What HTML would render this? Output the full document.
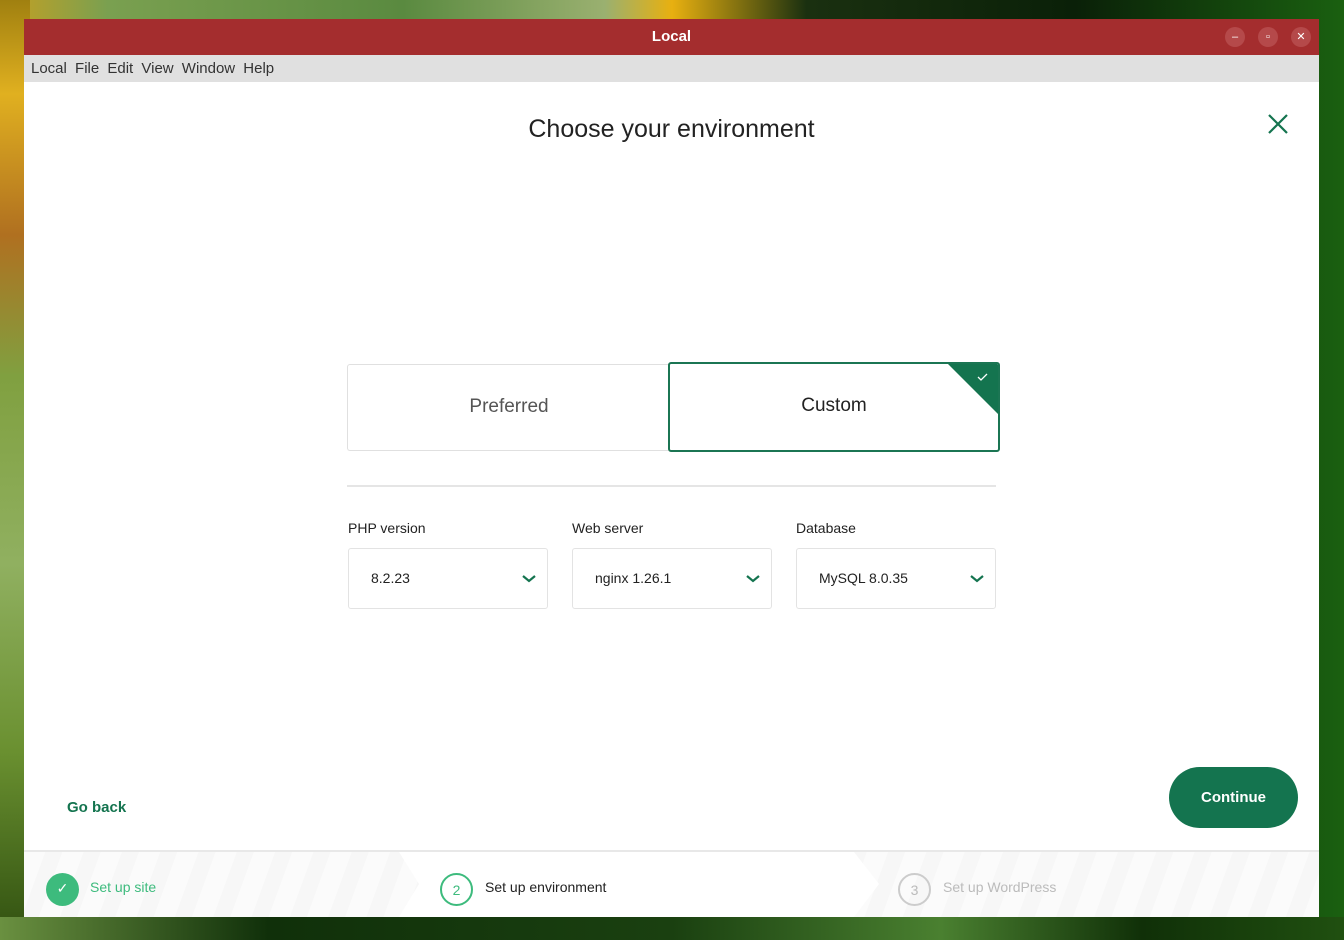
<!DOCTYPE html>
<html><head><style>
*{box-sizing:border-box;margin:0;padding:0}
body{width:1344px;height:940px;overflow:hidden;position:relative;font-family:"Liberation Sans",sans-serif;
background:linear-gradient(90deg,#c8a020 0%,#7aa050 8%,#5a8a40 30%,#9ab070 45%,#e8b010 50%,#1a3010 60%,#0a2008 80%,#1a6010 100%)}
.bg2{position:absolute;left:0;top:0;width:30px;height:940px;background:linear-gradient(180deg,#a08010,#e0b020 10%,#b07020 25%,#80a040 40%,#90b060 60%,#6a9030 80%,#305010)}
.bg3{position:absolute;left:0;top:917px;width:1344px;height:23px;background:linear-gradient(90deg,#6a9040,#10300a 20%,#1a4010 50%,#4a8030 70%,#103008 85%,#205010)}
.win{position:absolute;left:24px;top:19px;width:1295px;height:898px;background:#fff}
.title{height:36px;background:#a42d2e;color:#fff;font-weight:bold;font-size:15px;text-align:center;line-height:36px;position:relative}
.wb{position:absolute;top:8px;width:20px;height:20px;border-radius:50%;background:#b5494a;color:#fff;font-size:11px;line-height:20px;text-align:center;font-weight:normal}
.menu{height:27px;background:#e0e0e0;font-size:15px;color:#333;line-height:27px;padding-left:7px;word-spacing:4px}
h1{position:absolute;top:96px;width:100%;text-align:center;font-weight:normal;font-size:25px;color:#222}
.card{position:absolute;top:345px;height:87px;border:1px solid #e0e0e0;border-radius:3px;text-align:center;line-height:84px;font-size:19px}
.sel{position:absolute;top:529px;width:200px;height:61px;border:1px solid #e3e3e3;border-radius:3px;font-size:14px;color:#222;line-height:59px;padding-left:22px}
.sel svg{position:absolute;right:10px;top:25px}
.lab{position:absolute;top:501px;font-size:14px;color:#222}
.foot{position:absolute;left:0;top:831px;width:1295px;height:67px;border-top:2px solid #e8e8e8;
background:repeating-linear-gradient(110deg,#fbfbfb 0 20px,#f7f7f7 20px 36px)}
.circ{position:absolute;top:21px;width:33px;height:33px;border-radius:50%;text-align:center;line-height:31px;font-size:14px}
.st{position:absolute;top:27px;font-size:14px}
</style></head><body>
<div class="bg2"></div><div class="bg3"></div>
<div class="win">
<div class="title">Local
<div class="wb" style="left:1201px">–</div><div class="wb" style="left:1234px">▫</div><div class="wb" style="left:1267px">✕</div></div>
<div class="menu">Local File Edit View Window Help</div>
<h1>Choose your environment</h1>
<svg style="position:absolute;left:1243px;top:94px" width="22" height="22"><path d="M2 2L20 20M20 2L2 20" stroke="#14744f" stroke-width="2.2"/></svg>
<div class="card" style="left:323px;width:323px;color:#555;border-right:none">Preferred</div>
<div class="card" style="left:644px;top:343px;width:332px;height:90px;border:2px solid #1b7553;color:#222;overflow:hidden;line-height:84px">Custom
<svg style="position:absolute;right:-2px;top:-2px" width="54" height="54"><path d="M0 0H54V54Z" fill="#14744f"/><path d="M32 15l3 3 6-6" stroke="#fff" stroke-width="1.3" fill="none"/></svg></div>
<div style="position:absolute;left:323px;top:466px;width:649px;height:2px;background:#e5e5e5"></div>
<div class="lab" style="left:324px">PHP version</div>
<div class="lab" style="left:548px">Web server</div>
<div class="lab" style="left:772px">Database</div>
<div class="sel" style="left:324px">8.2.23<svg width="16" height="9"><path d="M2 2l6 5 6-5" stroke="#14744f" stroke-width="2.2" fill="none"/></svg></div>
<div class="sel" style="left:548px">nginx 1.26.1<svg width="16" height="9"><path d="M2 2l6 5 6-5" stroke="#14744f" stroke-width="2.2" fill="none"/></svg></div>
<div class="sel" style="left:772px">MySQL 8.0.35<svg width="16" height="9"><path d="M2 2l6 5 6-5" stroke="#14744f" stroke-width="2.2" fill="none"/></svg></div>
<div style="position:absolute;left:43px;top:780px;font-size:15px;font-weight:bold;color:#14744f">Go back</div>
<div style="position:absolute;left:1145px;top:748px;width:129px;height:61px;border-radius:31px;background:#14744f;color:#fff;font-weight:bold;font-size:15px;text-align:center;line-height:61px">Continue</div>
<div class="foot">
<div style="position:absolute;left:375px;top:0;width:480px;height:65px;background:#fff;clip-path:polygon(0 0,455px 0,480px 32px,455px 65px,0 65px,20px 32px)"></div>
<div class="circ" style="left:22px;background:#3dbb7d;color:#fff">✓</div><div class="st" style="left:66px;color:#3dbb7d">Set up site</div>
<div class="circ" style="left:416px;border:2px solid #3dbb7d;color:#3dbb7d">2</div><div class="st" style="left:461px;color:#222">Set up environment</div>
<div class="circ" style="left:874px;border:2px solid #ccc;color:#bbb">3</div><div class="st" style="left:919px;color:#bbb">Set up WordPress</div>
</div>
</div>
</body></html>
